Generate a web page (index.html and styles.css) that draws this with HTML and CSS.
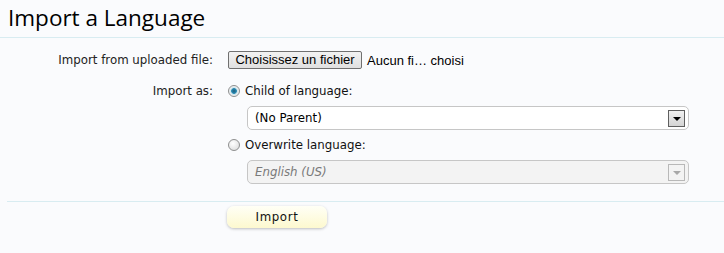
FILE: index.html
```html
<!DOCTYPE html>
<html>
<head>
<meta charset="utf-8">
<link rel="stylesheet" href="styles.css">
</head>
<body>
<h1 class="title">Import a Language</h1>
<form class="form">
  <div class="row row-file">
    <div class="label">Import from uploaded file:</div>
    <div class="ctrl file-ctrl">
      <span class="file-btn">Choisissez un fichier</span>
      <span class="file-name">Aucun fi… choisi</span>
    </div>
  </div>
  <div class="row row-as">
    <div class="label">Import as:</div>
    <div class="ctrl">
      <div class="radio-line">
        <span class="radio checked"></span>
        <span class="radio-text">Child of language:</span>
      </div>
      <div class="select">
        <span class="select-text">(No Parent)</span>
        <span class="arrow"><span class="tri"></span></span>
      </div>
      <div class="radio-line second">
        <span class="radio"></span>
        <span class="radio-text">Overwrite language:</span>
      </div>
      <div class="select disabled">
        <span class="select-text">English (US)</span>
        <span class="arrow"><span class="tri"></span></span>
      </div>
    </div>
  </div>
  <div class="submit-row">
    <span class="import-btn">Import</span>
  </div>
</form>
</body>
</html>
```
FILE: styles.css
```css
html, body {
  margin: 0;
  padding: 0;
  background: #fafbfd;
}
body {
  font-family: "DejaVu Sans", sans-serif;
  font-size: 11.8px;
  color: #000;
}
.title {
  margin: 0;
  padding: 4px 0 0 8px;
  font-family: "Open Sans", sans-serif;
  font-weight: normal;
  font-size: 22.5px;
  line-height: 28px;
  color: #000;
  border-bottom: 1px solid #d8ecf1;
  box-sizing: border-box;
  height: 38px;
}
.form {
  margin: 0 0 0 7px;
}
.row {
  display: grid;
  grid-template-columns: 206px 1fr;
  column-gap: 15px;
}
.label {
  text-align: right;
  color: #222;
}
.row-file {
  margin-top: 13px;
  align-items: center;
}
.file-ctrl {
  display: flex;
  align-items: center;
  gap: 5px;
}
.file-btn {
  font-family: "Liberation Sans", Arial, sans-serif;
  font-size: 13px;
  line-height: 16px;
  padding: 0 6px;
  border: 1px solid #707070;
  border-radius: 2px;
  background: linear-gradient(#f2f2f2, #e0e0e0);
  height: 16px;
  width: 120px;
  text-align: center;
}
.file-name {
  font-family: "Liberation Sans", Arial, sans-serif;
  font-size: 13px;
}
.row-as {
  margin-top: 13px;
}
.row-as .label {
  line-height: 18px;
}
.radio-line {
  display: flex;
  align-items: center;
  height: 18px;
}
.radio-line.second {
  margin-top: 6px;
}
.radio {
  width: 10px;
  height: 10px;
  border-radius: 50%;
  border: 1px solid #8e8f8f;
  background: radial-gradient(circle at 40% 35%, #ffffff, #d8d8d8);
  margin-right: 5px;
}
.radio.checked {
  background: radial-gradient(circle, #1e5c7a 0, #2a8cb5 2.5px, #cfe3ea 3.2px, #f4f4f4 5px);
}
.radio-text {
  color: #111;
}
.select {
  margin: 6px 0 0 19px;
  width: 440px;
  height: 22px;
  border: 1px solid #c6c6c6;
  border-radius: 5px;
  background: #fff;
  display: flex;
  align-items: center;
  justify-content: space-between;
}
.select-text {
  padding-left: 7px;
}
.select.disabled {
  background: #f3f3f3;
}
.select.disabled .select-text {
  font-style: italic;
  color: #7a7a7a;
}
.arrow {
  width: 15px;
  height: 15px;
  border: 1px solid #5f5f5f;
  background: linear-gradient(#f0f0f0, #d4d4d4);
  margin-right: 3px;
  display: flex;
  align-items: center;
  justify-content: center;
}
.tri {
  width: 0;
  height: 0;
  border-left: 4px solid transparent;
  border-right: 4px solid transparent;
  border-top: 4px solid #000;
  margin-top: 1px;
}
.select.disabled .arrow {
  border-color: #b8b8b8;
  background: #f3f3f3;
}
.select.disabled .tri {
  border-top-color: #a8a8a8;
}
.submit-row {
  margin-top: 17px;
  border-top: 1px solid #d8ecf1;
  padding: 4px 0 0 220px;
  height: 40px;
}
.import-btn {
  display: inline-block;
  width: 100px;
  height: 22px;
  line-height: 22px;
  text-align: center;
  border-radius: 7px;
  background: linear-gradient(#fffff6, #fdf9cf);
  box-shadow: 0 1px 3px rgba(0, 0, 0, 0.25);
  letter-spacing: 0.6px;
  color: #111;
}
```
